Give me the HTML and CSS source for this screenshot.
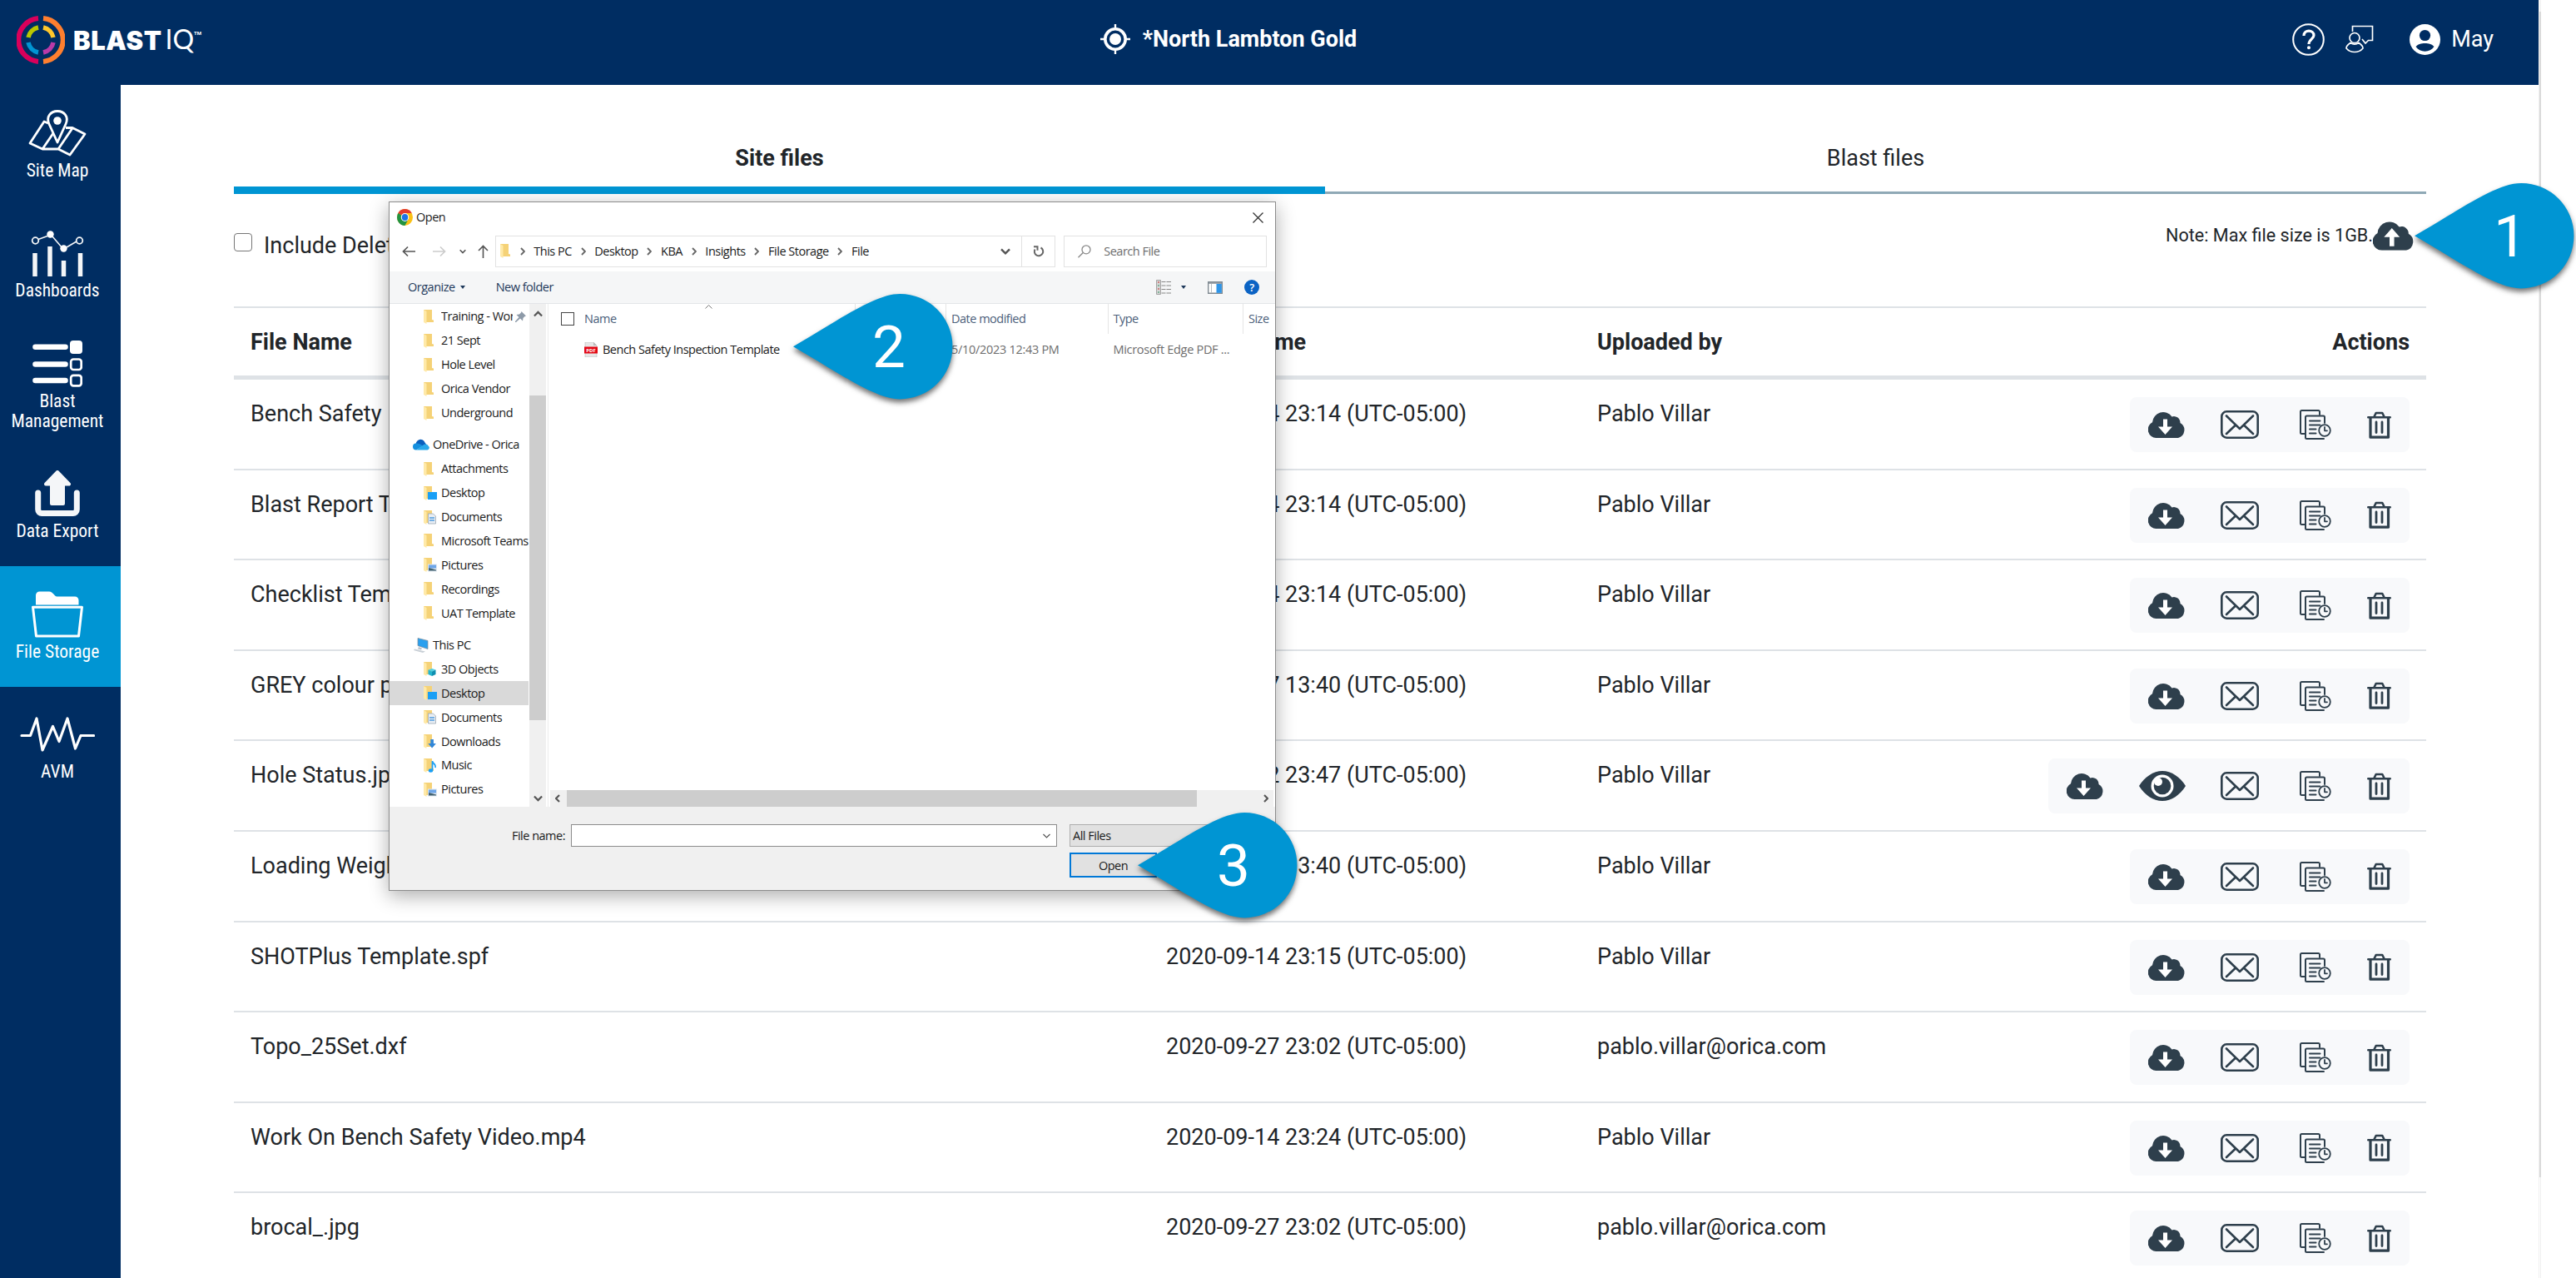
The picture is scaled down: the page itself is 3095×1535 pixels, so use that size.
FILE: index.html
```html
<!DOCTYPE html>
<html lang="en">
<head>
    <meta charset="UTF-8">
    <meta name="viewport" content="width=device-width, initial-scale=1.0">
    <title>BlastIQ - File Storage</title>
    <link rel="stylesheet" href="styles.css">
</head>
<body>
    <!-- Shared icons -->
    <svg class="sprite" aria-hidden="true">
        <symbol id="cloud" viewBox="0 0 45 32">
            <path d="M10 32A10 10 0 0 1 5 13.200A13 13 0 0 1 28.500 6.500A7.500 7.500 0 0 1 38.500 14A9.800 9.800 0 0 1 36 32z"/>
        </symbol>
        <symbol id="download" viewBox="0 0 45 32">
            <use href="#cloud" width="45" height="32"/>
            <path fill="#fff" d="M18 9.500h5v9h6l-8.500 9.500-8.500-9.500h6z"/>
        </symbol>
        <symbol id="upload" viewBox="0 0 45 32">
            <use href="#cloud" width="45" height="32"/>
            <path fill="#fff" d="M20.500 8l8.500 9.500h-6v10h-5v-10h-6z"/>
        </symbol>
        <symbol id="eye" viewBox="0 0 56 36">
            <path d="M0 18C7 7 17 0 28 0S49 7 56 18C49 29 39 36 28 36S7 29 0 18z"/>
            <circle cx="28" cy="18" r="13.500" fill="#fff"/>
            <circle cx="28" cy="18" r="10.300"/>
            <circle cx="23" cy="13" r="5" fill="#fff"/>
        </symbol>
        <symbol id="mail" viewBox="0 0 46 34">
            <g fill="none" stroke="currentColor" stroke-width="2.600" stroke-linecap="round" stroke-linejoin="round">
                <rect x="1.300" y="1.300" width="43.400" height="31.400" rx="6"/>
                <path d="M7 6.500l16 15.500 16-15.500M7 28l10-9.500M39 28l-10-9.500"/>
            </g>
        </symbol>
        <symbol id="history" viewBox="0 0 46 36">
            <g fill="none" stroke="currentColor" stroke-width="2" stroke-linecap="round" stroke-linejoin="round">
                <path d="M13 29H9.500a1.500 1.500 0 0 1-1.500-1.500V2.500A1.500 1.500 0 0 1 9.500 1h20a1.500 1.500 0 0 1 1.500 1.500V6"/>
                <path d="M37 16V9a1.500 1.500 0 0 0-1.500-1.500h-20A1.500 1.500 0 0 0 14 9v24.500a1.500 1.500 0 0 0 1.500 1.500H36"/>
                <path d="M19 13.500h12.500M19 18.500h12.500M19 23.500h7.500M19 28.500h7.500"/>
                <circle cx="37" cy="25" r="6.800" stroke-width="1.800"/>
                <path d="M37 21v4.300h3" stroke-width="1.800"/>
            </g>
        </symbol>
        <symbol id="trash" viewBox="0 0 29 33">
            <g fill="none" stroke="currentColor" stroke-width="2.600" stroke-linecap="round" stroke-linejoin="round">
                <path d="M1.300 7.200h26.400M8.500 6.500l2.200-4.500h7.600l2.200 4.500"/>
                <path d="M4 8v23.200h21.500V8" stroke-width="3.200"/>
                <path d="M11 13v12.500M18 13v12.500" stroke-width="2.800"/>
            </g>
        </symbol>
        <symbol id="folder" viewBox="0 0 16 17">
            <path fill="#f5d277" d="M0 0h10v12l2 .5V15H0z"/>
            <path fill="#ffe9a8" d="M0 0l3.500 2V17L0 15z"/>
        </symbol>
        <symbol id="folder-desktop" viewBox="0 0 16 17">
            <use href="#folder" width="16" height="17"/>
            <path fill="#1a9ff5" d="M5 7h11v9H5z"/>
        </symbol>
        <symbol id="folder-doc" viewBox="0 0 16 17">
            <use href="#folder" width="16" height="17"/>
            <path fill="#e9eef3" stroke="#9aa7b4" stroke-width=".8" d="M5.500 4h6l3 3v9h-9z"/>
            <path stroke="#4c9be0" stroke-width="1.500" d="M7 9h6M7 12h6"/>
        </symbol>
        <symbol id="folder-pic" viewBox="0 0 16 17">
            <use href="#folder" width="16" height="17"/>
            <path fill="#dfe7f0" d="M5 7.500h11v9H5z"/>
            <path fill="#6ea6e8" d="M6 8.500h9v4H6z"/>
            <path fill="#41616f" d="M6 12l4 1 5 1.500v1H6z"/>
        </symbol>
        <symbol id="folder-3d" viewBox="0 0 16 17">
            <use href="#folder" width="16" height="17"/>
            <path fill="#4fd0e2" d="M5.500 9.500l4.500-1.500 4.500 1.500-4.500 2z"/>
            <path fill="#23b5cf" d="M5.500 9.500l4.500 2V17l-4.500-2z"/>
            <path fill="#0f8fb0" d="M14.500 9.500l-4.500 2V17l4.500-2z"/>
        </symbol>
        <symbol id="folder-down" viewBox="0 0 16 17">
            <use href="#folder" width="16" height="17"/>
            <path fill="#2f86d8" d="M8.300 6h3.600v5h3l-4.800 5.500L5.300 11h3z"/>
        </symbol>
        <symbol id="folder-music" viewBox="0 0 16 17">
            <use href="#folder" width="16" height="17"/>
            <path fill="none" stroke="#1a9ff5" stroke-width="1.700" d="M10.500 14V3c0 3 4.500 3 3.500 8"/>
            <ellipse cx="8.500" cy="14.500" rx="2.700" ry="2.200" fill="#1a9ff5"/>
        </symbol>
        <symbol id="onedrive" viewBox="0 0 20 13">
            <path fill="#0a5fbd" d="M4 8A5.500 5.500 0 0 1 14.500 4L18 9z"/>
            <path fill="#1490df" d="M4 13A4 4 0 0 1 4 5C8 5 10 6.500 12 8z"/>
            <path fill="#28a8ea" d="M4 13l10-7c3-.5 4.500 1 4.500 2a2.700 2.700 0 0 1-1 5z"/>
        </symbol>
        <symbol id="pc" viewBox="0 0 18 18">
            <path fill="#2ba0ee" stroke="#7d8a96" stroke-width=".7" d="M5 .5l12 3v10L5 9.500z"/>
            <path fill="#b9c2cb" d="M6 11l4 1.500-1 2-4-1z"/>
            <path fill="#c8cfd6" d="M1 13.500l13 3-3 1.500L0 15z"/>
        </symbol>
        <symbol id="chev" viewBox="0 0 6 10">
            <path d="M1 1l4 4-4 4" fill="none" stroke="#666" stroke-width="1.900"/>
        </symbol>
        <symbol id="chev-down" viewBox="0 0 12 8">
            <path d="M1 1.300l5 5 5-5" fill="none" stroke="currentColor" stroke-width="2.400"/>
        </symbol>
        <symbol id="pin" viewBox="0 0 192 132">
            <path fill="#0095d3" d="M0 63.200C56 31 98 0 128.300 0a63.200 63.200 0 0 1 0 126.400C98 126.400 56 95.400 0 63.200z"/>
        </symbol>
    </svg>

    <div class="app">
        <header class="topbar">
            <div class="logo">
                <svg width="58" height="58" viewBox="-29 -29 58 58" fill="none">
                    <path d="M-3 -25.900A26 26 0 0 0 -3 25.900" stroke="#d9005b" stroke-width="6"/>
                    <path d="M3 -25.900A26 26 0 0 1 3 25.900" stroke="#ff7f2f" stroke-width="6"/>
                    <path d="M-3 -15A15.300 15.300 0 0 0 -15 -3" stroke="#b9c800" stroke-width="5.500"/>
                    <path d="M3 -15A15.300 15.300 0 0 1 15 -3" stroke="#ffc72c" stroke-width="5.500"/>
                    <path d="M-15 3A15.300 15.300 0 0 0 -3 15" stroke="#0095d3" stroke-width="5.500"/>
                    <path d="M15 3A15.300 15.300 0 0 1 3 15" stroke="#b93aa8" stroke-width="5.500"/>
                </svg>
                <span class="logo-blast">BLAST</span><span class="logo-iq">IQ</span><span class="logo-tm">TM</span>
            </div>
            <div class="site-name">
                <svg width="36" height="36" viewBox="0 0 36 36">
                    <path d="M18 0v6M18 30v6M0 18h6M30 18h6" stroke="#fff" stroke-width="2.400"/>
                    <circle cx="18" cy="18" r="12.200" fill="none" stroke="#fff" stroke-width="3.600"/>
                    <circle cx="18" cy="18" r="7" fill="#fff"/>
                </svg>
                <span>*North Lambton Gold</span>
            </div>
            <div class="user-menu">
                <svg class="icon-help" width="39" height="39" viewBox="0 0 39 39" fill="none" stroke="#fff">
                    <circle cx="19.500" cy="19.500" r="18.300" stroke-width="2"/>
                    <path d="M14 15c0-8 12-7.500 12-.5 0 4-6 5-6 10.500" stroke-width="3.200"/>
                    <circle cx="20" cy="29.200" r="2" fill="#fff" stroke="none"/>
                </svg>
                <svg class="icon-feedback" width="34" height="34" viewBox="0 0 34 34" fill="none" stroke="#fff" stroke-width="1.700">
                    <path d="M8.500 8V1.500h24v17h-5l-3.500 3.500-4-5"/>
                    <circle cx="11" cy="15.500" r="6"/>
                    <path d="M6 21.500C2 24 1 26 1 28c5 6 15 6 20 0 0-2-1-4-5-6.500-3 2-7 2-10 0z"/>
                </svg>
                <svg class="icon-user" width="37" height="37" viewBox="0 0 37 37">
                    <circle cx="18.500" cy="18.500" r="18.500" fill="#fff"/>
                    <circle cx="18.500" cy="13.500" r="6.600" fill="#002d62"/>
                    <path d="M7.500 27c4-5.500 18-5.500 22 0-5 7.500-17 7.500-22 0z" fill="#002d62"/>
                </svg>
                <span>May</span>
            </div>
        </header>

        <div class="body">
            <nav class="sidebar">
                <a class="nav-item">
                    <svg width="70" height="56" viewBox="0 0 70 56" fill="none" stroke="#fff" stroke-width="2.800" stroke-linejoin="round">
                        <path d="M24 16l-5-2L2 40l15 7h19L50 54 68 29 53 21.500h-8M17 47l13-19M36 47l17-25"/>
                        <path d="M35 39L25 17c-4-9 2-15.500 10-15.500S49 8 45 17z"/>
                        <circle cx="35" cy="13" r="4.800" fill="#fff" stroke="none"/>
                    </svg>
                    <span>Site Map</span>
                </a>
                <a class="nav-item">
                    <svg width="64" height="56" viewBox="0 0 64 56" fill="none" stroke="#f4f6f8">
                        <path d="M5 28v28M23 20v36M39.500 37v19M59.500 28v28" stroke-width="5.500"/>
                        <path d="M9 11.500l11-4M26 8l12 14M43 21l12-7" stroke-width="1.600"/>
                        <circle cx="5.500" cy="13" r="3.800" stroke-width="1.800"/>
                        <circle cx="58.500" cy="13" r="3.800" stroke-width="1.800"/>
                        <circle cx="23.500" cy="5.500" r="4.200" fill="#fff" stroke="none"/>
                        <circle cx="39.500" cy="22.500" r="4.200" fill="#fff" stroke="none"/>
                    </svg>
                    <span>Dashboards</span>
                </a>
                <a class="nav-item">
                    <svg width="60" height="56" viewBox="0 0 60 56" fill="none" stroke="#fff">
                        <path d="M3.500 7.800h36M3.500 28.500h36M3.500 48h36" stroke-width="6.600" stroke-linecap="round"/>
                        <rect x="45" y="0" width="15" height="16" rx="4" fill="#fff" stroke="none"/>
                        <rect x="46.200" y="22.500" width="12.500" height="12.500" rx="3" stroke-width="2.700"/>
                        <rect x="46.200" y="41.800" width="12.500" height="12.500" rx="3" stroke-width="2.700"/>
                    </svg>
                    <span>Blast<br>Management</span>
                </a>
                <a class="nav-item">
                    <svg width="54" height="56" viewBox="0 0 54 56">
                        <path d="M3.700 27v20a4.500 4.500 0 0 0 4.500 4.500h37.600a4.500 4.500 0 0 0 4.500-4.500V27" fill="none" stroke="#f4f6f8" stroke-width="7" stroke-linecap="round"/>
                        <path d="M27 2L41 16.500H34V40H20V16.500H13z" fill="#f4f6f8" stroke="#f4f6f8" stroke-width="4" stroke-linejoin="round"/>
                    </svg>
                    <span>Data Export</span>
                </a>
                <a class="nav-item active">
                    <svg width="62" height="56" viewBox="0 0 62 56">
                        <path d="M5 16.500V5a4.500 4.500 0 0 1 4.500-4.500H21c5 0 6 6 9.500 6H52a4.500 4.500 0 0 1 4.500 4.500v5.500z" fill="#fff"/>
                        <path d="M1.500 19.200h59L56.500 54h-51z" fill="none" stroke="#fff" stroke-width="3" stroke-linejoin="round"/>
                    </svg>
                    <span>File Storage</span>
                </a>
                <a class="nav-item">
                    <svg width="90" height="56" viewBox="0 0 90 56" fill="none" stroke="#fff" stroke-width="3.200" stroke-linecap="round" stroke-linejoin="round">
                        <path d="M2 29.500h10.500L20 9l7 38L39.500 18.500l7.500 18L57 9l9.500 36 6.500-15.500h15.500"/>
                    </svg>
                    <span>AVM</span>
                </a>
            </nav>

            <main class="content">
                <div class="tabs">
                    <div class="tab active">Site files</div>
                    <div class="tab">Blast files</div>
                </div>
                <div class="filters">
                    <label class="include-deleted"><span class="checkbox"></span>Include Deleted</label>
                    <div class="upload">
                        <span>Note: Max file size is 1GB.</span>
                        <svg width="50" height="36"><use href="#upload"/></svg>
                    </div>
                </div>
                <div class="table">
                    <div class="table-head">
                        <div>File Name</div>
                        <div>Date and time</div>
                        <div>Uploaded by</div>
                        <div>Actions</div>
                    </div>
                    <div id="fileRows"></div>
                </div>
            </main>
        </div>
    </div>
    <div class="page-scroll"><div class="page-thumb"></div></div>

    <!-- File open dialog -->
    <div class="dialog">
        <div class="dialog-title">
            <svg width="19" height="20" viewBox="0 0 20 20" preserveAspectRatio="none">
                <circle cx="10" cy="10" r="10" fill="#fbc116"/>
                <path d="M10 10L1.340 5A10 10 0 0 1 18.660 5z" fill="#e33b2e"/>
                <path d="M10 10L1.340 5A10 10 0 0 0 10 20L14.500 12z" fill="#229342"/>
                <path d="M10 5h8.660L14 12z" fill="#fbc116"/>
                <circle cx="10" cy="10" r="5" fill="#fff"/>
                <circle cx="10" cy="10" r="3.900" fill="#1a73e8"/>
            </svg>
            <span>Open</span>
            <svg class="close" width="13" height="13" viewBox="0 0 13 13"><path d="M.5.5l12 12M12.500.5l-12 12" stroke="#333" stroke-width="1.300"/></svg>
        </div>
        <div class="dialog-nav">
            <div class="nav-arrows">
                <svg width="16" height="14" viewBox="0 0 16 14" fill="none" stroke="#555" stroke-width="1.700"><path d="M16 7H1.500M7 1.500L1.500 7 7 12.500"/></svg>
                <svg width="16" height="14" viewBox="0 0 16 14" fill="none" stroke="#ccc" stroke-width="1.700"><path d="M0 7h14.500M9 1.500L14.500 7 9 12.500"/></svg>
                <svg width="8" height="6"><use href="#chev-down"/></svg>
                <svg width="13" height="16" viewBox="0 0 13 16" fill="none" stroke="#555" stroke-width="1.600"><path d="M6.500 16V1.500M1 7l5.500-5.500L12 7"/></svg>
            </div>
            <div class="address">
                <svg class="folder" width="16" height="17"><use href="#folder"/></svg>
                <svg width="6" height="10"><use href="#chev"/></svg><span>This PC</span>
                <svg width="6" height="10"><use href="#chev"/></svg><span>Desktop</span>
                <svg width="6" height="10"><use href="#chev"/></svg><span>KBA</span>
                <svg width="6" height="10"><use href="#chev"/></svg><span>Insights</span>
                <svg width="6" height="10"><use href="#chev"/></svg><span>File Storage</span>
                <svg width="6" height="10"><use href="#chev"/></svg><span>File</span>
                <svg class="address-drop" width="12" height="8"><use href="#chev-down"/></svg>
                <div class="refresh">
                    <svg width="14" height="14" viewBox="0 0 14 14" fill="none" stroke="#666" stroke-width="2"><path d="M9.500 2.500A5.200 5.200 0 1 1 2.500 4.500M1 1.200h4.500v4.500"/></svg>
                </div>
            </div>
            <div class="search">
                <svg width="16" height="16" viewBox="0 0 16 16" fill="none" stroke="#888" stroke-width="1.300"><circle cx="10" cy="5.800" r="5"/><path d="M6.300 9.500L.5 15.300"/></svg>
                <span>Search File</span>
            </div>
        </div>
        <div class="dialog-tools">
            <span>Organize</span>
            <svg width="6" height="4" viewBox="0 0 6 4"><path d="M0 0h6L3 4z" fill="#1e395b"/></svg>
            <span class="new-folder">New folder</span>
            <div class="view-tools">
                <svg width="18" height="18" viewBox="0 0 18 18"><path d="M.5.500h5v17h-5z" fill="#d5d5d5" stroke="#a5a5a5"/><path d="M2 3h2M2 11h2" stroke="#c66" stroke-width="1.500"/><path d="M2 7h2M2 15h2" stroke="#6a8" stroke-width="1.500"/><path d="M6.500 2.500h5M12.500 2.500h5.500M6.500 7h5M12.500 7h5.500M6.500 11.500h5M12.500 11.500h5.500M6.500 16h5M12.500 16h5.500" stroke="#888" stroke-width="1.200"/></svg>
                <svg class="tools-caret" width="6" height="4" viewBox="0 0 6 4"><path d="M0 0h6L3 4z" fill="#1e395b"/></svg>
                <svg width="18" height="15" viewBox="0 0 18 15"><path d="M.7.700h16.600v13.600H.7z" fill="#fff" stroke="#808a92" stroke-width="1.400"/><path d="M4.500 3v11" stroke="#b5bcc2"/><path d="M10.500 3h6.300v10.800h-6.300z" fill="#2f95e8"/><path d="M.7 2h16.600" stroke="#808a92" stroke-width="1.500"/></svg>
                <span class="help">?</span>
            </div>
        </div>
        <div class="dialog-main">
            <div class="tree" id="tree"></div>
            <div class="vscroll">
                <svg width="11" height="8" class="flip"><use href="#chev-down"/></svg>
                <div class="vthumb"></div>
                <svg width="11" height="8"><use href="#chev-down"/></svg>
            </div>
            <div class="files">
                <svg class="sort" width="9" height="5" viewBox="0 0 9 5"><path d="M.5 4.500l4-4 4 4" fill="none" stroke="#777"/></svg>
                <div class="files-head">
                    <div class="col-name"><span class="box"></span>Name</div>
                    <div></div>
                    <div>Date modified</div>
                    <div>Type</div>
                    <div>Size</div>
                </div>
                <div class="file-row">
                    <div class="file-name">
                        <svg width="16" height="18" viewBox="0 0 16 18"><path d="M1 0h10l4 4v14H1z" fill="#e6e6e6" stroke="#bbb" stroke-width=".6"/><path d="M11 0v4h4z" fill="#bbb"/><path d="M0 5.500h16v8H0z" fill="#e30613"/><text x="8" y="11.500" class="pdf">PDF</text></svg>
                        Bench Safety Inspection Template
                    </div>
                    <div></div>
                    <div>5/10/2023 12:43 PM</div>
                    <div>Microsoft Edge PDF ...</div>
                    <div></div>
                </div>
                <div class="hscroll">
                    <svg width="6" height="10" viewBox="0 0 6 10"><path d="M5 1L1 5l4 4" fill="none" stroke="#555" stroke-width="2.200"/></svg>
                    <div class="hthumb"></div>
                    <svg class="hright" width="6" height="10" viewBox="0 0 6 10"><path d="M1 1l4 4-4 4" fill="none" stroke="#555" stroke-width="2.200"/></svg>
                </div>
            </div>
        </div>
        <div class="dialog-foot">
            <span class="foot-label">File name:</span>
            <div class="foot-input"><svg width="9" height="6" viewBox="0 0 9 6"><path d="M.5 1l4 4 4-4" fill="none" stroke="#555" stroke-width="1.200"/></svg></div>
            <div class="foot-type">All Files</div>
            <div class="foot-open">Open</div>
        </div>
    </div>

    <!-- Numbered step markers -->
    <div class="step step-1"><svg width="192" height="132"><use href="#pin"/></svg><span>1</span></div>
    <div class="step step-2"><svg width="192" height="132"><use href="#pin"/></svg><span>2</span></div>
    <div class="step step-3"><svg width="192" height="132"><use href="#pin"/></svg><span>3</span></div>

    <script>
        const files = [
            { name: 'Bench Safety Inspection.pdf', date: '2020-09-14 23:14', by: 'Pablo Villar' },
            { name: 'Blast Report Template.docx', date: '2020-09-14 23:14', by: 'Pablo Villar' },
            { name: 'Checklist Template.xlsx', date: '2020-09-14 23:14', by: 'Pablo Villar' },
            { name: 'GREY colour palette.pdf', date: '2020-09-27 13:40', by: 'Pablo Villar' },
            { name: 'Hole Status.jpg', date: '2020-09-22 23:47', by: 'Pablo Villar', preview: true },
            { name: 'Loading Weights.xlsx', date: '2020-09-27 13:40', by: 'Pablo Villar' },
            { name: 'SHOTPlus Template.spf', date: '2020-09-14 23:15', by: 'Pablo Villar' },
            { name: 'Topo_25Set.dxf', date: '2020-09-27 23:02', by: 'pablo.villar@orica.com' },
            { name: 'Work On Bench Safety Video.mp4', date: '2020-09-14 23:24', by: 'Pablo Villar' },
            { name: 'brocal_.jpg', date: '2020-09-27 23:02', by: 'pablo.villar@orica.com' }
        ];

        const tree = [
            ['folder', 'Training - Work', 'pinned'],
            ['folder', '21 Sept'],
            ['folder', 'Hole Level'],
            ['folder', 'Orica Vendor'],
            ['folder', 'Underground'],
            ['onedrive', 'OneDrive - Orica', 'root'],
            ['folder', 'Attachments'],
            ['folder-desktop', 'Desktop'],
            ['folder-doc', 'Documents'],
            ['folder', 'Microsoft Teams'],
            ['folder-pic', 'Pictures'],
            ['folder', 'Recordings'],
            ['folder', 'UAT Template'],
            ['pc', 'This PC', 'root'],
            ['folder-3d', '3D Objects'],
            ['folder-desktop', 'Desktop', 'selected'],
            ['folder-doc', 'Documents'],
            ['folder-down', 'Downloads'],
            ['folder-music', 'Music'],
            ['folder-pic', 'Pictures']
        ];

        const icon = (id, w, h) => `<svg width="${w}" height="${h}"><use href="#${id}"/></svg>`;

        document.getElementById('fileRows').innerHTML = files.map(file => `
            <div class="table-row">
                <div>${file.name}</div>
                <div>${file.date} (UTC-05:00)</div>
                <div>${file.by}</div>
                <div class="actions">
                    ${icon('download', 45, 32)}
                    ${file.preview ? icon('eye', 56, 36) : ''}
                    ${icon('mail', 46, 34)}
                    ${icon('history', 46, 36)}
                    ${icon('trash', 29, 33)}
                </div>
            </div>
        `).join('');

        const thumbtack = '<svg class="thumbtack" width="13" height="13" viewBox="0 0 13 13"><path d="M7.500 0L13 5.500l-1.500.5-2 2-.5 3.500-3-3L1 13H0v-1l4.500-5-3-3L5 3.500l2-2z" fill="#8d9aa8"/></svg>';

        document.getElementById('tree').innerHTML = tree.map(([id, label, state]) => `
            <div class="tree-item ${state || ''}">
                ${state === 'root' ? icon(id, 20, id === 'pc' ? 18 : 14) : icon(id, 16, 17)}
                <span>${label}</span>${state === 'pinned' ? thumbtack : ''}
            </div>
        `).join('');
    </script>
</body>
</html>
```
FILE: styles.css
```css
* {
    margin: 0;
    padding: 0;
    box-sizing: border-box;
}

body {
    position: relative;
    width: 3095px;
    height: 1535px;
    overflow: hidden;
    font-family: Roboto, "Liberation Sans", sans-serif;
    font-size: 27px;
    color: #212529;
    background: #fff;
}

svg {
    display: block;
    flex: none;
}

.sprite {
    position: absolute;
    width: 0;
    height: 0;
}

.app {
    width: 3050px;
}

/* Top bar */
.topbar {
    display: grid;
    grid-template-columns: 1fr auto 1fr;
    align-items: center;
    height: 102px;
    padding: 0 54px 8px 20px;
    background: #002d62;
    color: #fff;
}

.logo {
    display: flex;
    align-items: center;
    padding-top: 2px;
}

.logo-blast {
    margin-left: 10px;
    font-family: Inter, sans-serif;
    font-size: 31px;
    font-weight: 900;
    letter-spacing: 0.5px;
}

.logo-iq {
    margin: -3px 0 0 4px;
    font-family: Lato, sans-serif;
    font-size: 32px;
    font-weight: 400;
}

.logo-tm {
    margin-bottom: 18px;
    font-size: 6px;
    font-weight: 700;
}

.site-name {
    display: flex;
    align-items: center;
    gap: 15px;
    margin-left: -64px;
    font-weight: 700;
}

.user-menu {
    display: flex;
    align-items: center;
    justify-content: flex-end;
}

.icon-help {
    margin-right: 25px;
}

.icon-feedback {
    margin-right: 43px;
}

.icon-user {
    margin-right: 13px;
}

/* Sidebar */
.body {
    display: flex;
    height: 1433px;
}

.sidebar {
    width: 145px;
    background: #002d62;
}

.nav-item {
    display: flex;
    flex-direction: column;
    align-items: center;
    justify-content: center;
    gap: 5px;
    width: 145px;
    height: 144.5px;
    padding-right: 7px;
    color: #fff;
    font-size: 21.5px;
    font-stretch: 75%;
    line-height: 24px;
    text-align: center;
}

.nav-item.active {
    background: #0095d3;
}

/* Content */
.content {
    flex: 1;
    padding: 46px 135px 0 136px;
}

.tabs {
    display: flex;
    align-items: flex-end;
    height: 85px;
}

.tab {
    flex: 1;
    height: 85px;
    padding-top: 24px;
    border-bottom: 3px solid #8fa9b6;
    line-height: 36px;
    text-align: center;
}

.tab.active {
    flex: 0 0 1311px;
    border-bottom: 9px solid #0095d3;
    font-weight: 700;
}

.filters {
    display: flex;
    justify-content: space-between;
    height: 135px;
    padding-right: 14px;
}

.include-deleted {
    display: flex;
    align-items: center;
    gap: 14px;
    height: 36px;
    margin-top: 44px;
}

.checkbox {
    width: 22px;
    height: 22px;
    margin-bottom: 8px;
    border: 1.5px solid #767676;
    border-radius: 4px;
}

.upload {
    display: flex;
    align-items: center;
    height: 36px;
    margin-top: 32px;
    font-size: 21.6px;
    fill: #2e3f4c;
}

.upload span {
    margin-bottom: 2px;
}

.table-head,
.table-row {
    display: grid;
    grid-template-columns: 1100px 518px 1fr auto;
    padding: 0 20px;
}

.table-head {
    height: 88px;
    padding-top: 24px;
    border-top: 2px solid #dee2e6;
    border-bottom: 5px solid #dee2e6;
    font-weight: 700;
    line-height: 34px;
}

.table-row {
    height: 108.6px;
    padding-top: 23px;
    border-bottom: 2px solid #dee2e6;
    line-height: 36px;
}

.actions {
    display: flex;
    align-items: center;
    gap: 42px;
    height: 66px;
    margin-top: -2px;
    padding: 0 22px;
    border-radius: 8px;
    background: #f8f9fb;
    color: #2e3f4c;
    fill: #2e3f4c;
}

.page-scroll {
    position: absolute;
    top: 0;
    left: 3050px;
    width: 3px;
    height: 1535px;
    padding-top: 14px;
    border-left: 1px solid #f0f0f0;
    border-right: 1px solid #f0f0f0;
}

.page-thumb {
    width: 2px;
    height: 1400px;
    background: #dadada;
}

/* File open dialog */
.dialog {
    position: absolute;
    top: 242px;
    left: 467px;
    width: 1066px;
    height: 828px;
    border: 1.5px solid #8c8c8c;
    background: #fff;
    box-shadow: 0 6px 22px rgba(0, 0, 0, 0.32);
    font-family: "Open Sans", "Noto Sans", sans-serif;
    font-size: 14.5px;
    letter-spacing: -0.5px;
    line-height: 20px;
    color: #1a1a1a;
}

.dialog-title {
    display: flex;
    align-items: center;
    gap: 4px;
    height: 38px;
    padding: 0 14px 2px 9px;
}

.close {
    margin-left: auto;
}

.dialog-nav {
    display: flex;
    align-items: center;
    height: 45px;
    padding: 0 10px 4px 15px;
    color: #555;
}

.nav-arrows {
    display: flex;
    align-items: center;
    width: 112px;
}

.nav-arrows svg:nth-child(2) {
    margin: 0 16px 0 21px;
}

.nav-arrows svg:nth-child(4) {
    margin-left: 14px;
}

.address {
    display: flex;
    align-items: center;
    gap: 10.7px;
    width: 674px;
    height: 38px;
    padding-left: 5px;
    border: 1.5px solid #e2e2e2;
}

.address span {
    color: #1a1a1a;
}

.address .folder {
    margin-right: -3px;
}

.address-drop {
    margin-left: auto;
}

.refresh {
    display: flex;
    align-items: center;
    justify-content: center;
    width: 40px;
    height: 36px;
    margin-left: 3px;
    border-left: 1.5px solid #e2e2e2;
}

.search {
    display: flex;
    align-items: center;
    gap: 15px;
    width: 244px;
    height: 38px;
    margin-left: 10px;
    padding-left: 16px;
    border: 1.5px solid #e2e2e2;
    color: #6d6d6d;
}

.dialog-tools {
    display: flex;
    align-items: center;
    gap: 6px;
    height: 39px;
    padding: 0 19px 0 22px;
    border-bottom: 1px solid #e3e5e8;
    background: #f5f6f7;
    color: #1e395b;
}

.new-folder {
    margin-left: 31px;
}

.view-tools {
    display: flex;
    align-items: center;
    margin-left: auto;
}

.tools-caret {
    margin: 0 26px 0 12px;
}

.help {
    width: 18px;
    height: 18px;
    margin-left: 26px;
    border-radius: 50%;
    background: #0b63c4;
    color: #fff;
    font-size: 13px;
    font-weight: 600;
    line-height: 18px;
    text-align: center;
}

.dialog-main {
    display: flex;
    height: 604px;
}

.tree {
    width: 167px;
    padding-top: 1px;
    overflow: hidden;
}

.tree-item {
    display: flex;
    align-items: center;
    gap: 5px;
    height: 28.9px;
    padding-left: 41px;
    white-space: nowrap;
}

.tree-item.root {
    gap: 4px;
    margin-top: 9.5px;
    padding-left: 28px;
}

.tree-item.selected {
    background: #d9d9d9;
}

.tree-item.pinned {
    gap: 3px;
}

.tree-item.pinned span {
    width: 86px;
    margin-left: 2px;
    overflow: hidden;
}

.vscroll {
    display: flex;
    flex-direction: column;
    align-items: center;
    width: 20px;
    margin-left: 1px;
    padding: 8px 0 6px;
    background: #f0f0f0;
    color: #555;
}

.vthumb {
    width: 20px;
    height: 390px;
    margin: 94px 0 auto;
    background: #cdcdcd;
}

.flip {
    transform: rotate(180deg);
}

.files {
    display: flex;
    flex: 1;
    flex-direction: column;
    margin-left: 2px;
    border-left: 1px solid #ececec;
}

.sort {
    margin: 1px 0 -6px 188px;
}

.files-head,
.file-row {
    display: grid;
    grid-template-columns: 368px 109px 194.5px 162.5px 1fr;
}

.files-head {
    height: 33px;
    line-height: 36px;
    color: #4c607a;
}

.files-head div:not(:first-child) {
    padding-left: 6px;
    border-left: 1.5px solid #e5e5e5;
}

.col-name {
    display: flex;
    align-items: center;
    gap: 12px;
    padding-left: 15px;
}

.box {
    width: 16px;
    height: 16px;
    border: 1.3px solid #444;
    background: #fff;
}

.file-row {
    height: 44px;
    line-height: 44px;
    letter-spacing: -0.3px;
    color: #6d6d6d;
}

.file-row div:not(:first-child) {
    padding-left: 7px;
    white-space: nowrap;
}

.file-name {
    display: flex;
    align-items: center;
    gap: 6px;
    padding-left: 43px;
    letter-spacing: -0.5px;
    color: #1a1a1a;
}

.pdf {
    fill: #fff;
    font-size: 6px;
    font-weight: 700;
    letter-spacing: 0;
    text-anchor: middle;
}

.hscroll {
    display: flex;
    align-items: center;
    height: 20px;
    margin: auto 2px 0 2px;
    padding: 0 6px 0 6px;
    background: #f0f0f0;
}

.hthumb {
    width: 757px;
    height: 20px;
    margin-left: 8px;
    background: #cdcdcd;
}

.hright {
    margin-left: auto;
}

.dialog-foot {
    display: grid;
    grid-template-columns: 211px 591px 120px 1fr;
    grid-template-rows: 27px 30px;
    row-gap: 7px;
    height: 100px;
    padding: 21px 14px 0 0;
    background: #f0f0f0;
}

.foot-label {
    line-height: 27px;
    text-align: right;
}

.foot-input {
    display: flex;
    align-items: center;
    justify-content: flex-end;
    margin-left: 7px;
    padding-right: 7px;
    border: 1.5px solid #8c8c8c;
    background: #fff;
}

.foot-type {
    grid-column: 3 / 5;
    margin-left: 15px;
    padding-left: 3px;
    border: 1.5px solid #adadad;
    background: #e1e1e1;
    line-height: 25px;
}

.foot-open {
    grid-column: 3;
    width: 105px;
    margin-left: 15px;
    border: 2px solid #0078d7;
    background: #e1e1e1;
    line-height: 27px;
    text-align: center;
}

/* Step markers */
.step {
    position: absolute;
    width: 192px;
    height: 132px;
    filter: drop-shadow(0 4px 3px rgba(0, 0, 0, 0.55));
    color: #fff;
}

.step span {
    position: absolute;
    top: 26px;
    left: 95px;
    width: 40px;
    font-size: 71px;
    line-height: 76px;
    text-align: center;
}

.step-1 {
    top: 220px;
    left: 2901px;
}

.step-2 {
    top: 353px;
    left: 953px;
}

.step-3 {
    top: 976px;
    left: 1367px;
}
```
